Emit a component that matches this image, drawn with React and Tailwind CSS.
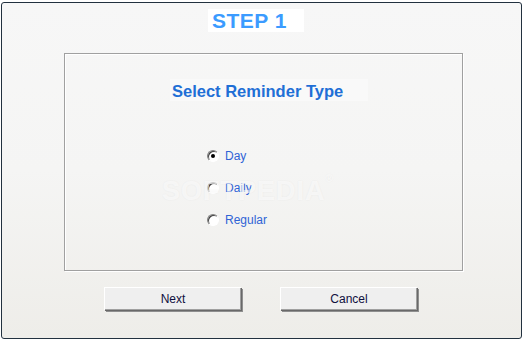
import React, { useState } from "react";

function Radio({ checked, label, onClick }) {
  return (
    <div className="flex items-center h-[14px] cursor-default" onClick={onClick}>
      <div className="w-[12px] h-[12px] rounded-full border border-t-[#808080] border-l-[#808080] border-b-[#ffffff] border-r-[#ffffff] bg-white flex items-center justify-center shadow-[inset_1px_1px_0_#404040]">
        {checked && <div className="w-[4px] h-[4px] rounded-full bg-black" />}
      </div>
      <span className="ml-[6px] text-[12px] leading-[14px] text-[#2f63d6]">{label}</span>
    </div>
  );
}

function Btn({ children }) {
  return (
    <div className="w-[137px] h-[23px] bg-[#efefef] border-t border-l border-t-white border-l-white shadow-[inset_-1px_-1px_0_#a0a0a0,1px_1px_0_#696969,2px_2px_0_#8f8f8f] flex items-center justify-center text-[12px] text-[#101040]">
      {children}
    </div>
  );
}

export default function App() {
  const [sel, setSel] = useState(0);
  return (
    <div className="w-[523px] h-[341px] bg-white pt-[2px] pl-[1px]" style={{ fontFamily: '"Liberation Sans", Arial, sans-serif' }}>
      <div className="w-[521px] h-[337px] border border-[#22313f] rounded-[3px] bg-gradient-to-b from-[#f7f7f7] via-[#f5f5f4] to-[#eeede9] relative flex flex-col">
        <div className="ml-[206px] mt-[6px] w-[96px] h-[23px] bg-white flex items-center pl-[4px]">
          <span className="text-[21px] font-bold text-[#3b9bff] leading-none tracking-[0.5px]">STEP 1</span>
        </div>
        <div className="ml-[62px] mt-[21px] w-[399px] h-[218px] border border-[#a0a0a0] shadow-[inset_1px_1px_0_#ffffff,1px_1px_0_#ffffff] flex flex-col">
          <div className="ml-[105px] mt-[25px] w-[198px] h-[22px] bg-[#f9f9f9] flex items-center pl-[2px] pt-[2px]">
            <span className="text-[16.5px] font-bold text-[#1f6fd6] leading-none">Select Reminder Type</span>
          </div>
          <div className="ml-[142px] mt-[48px] flex flex-col gap-[18px]">
            <Radio checked={sel === 0} label="Day" onClick={() => setSel(0)} />
            <Radio checked={sel === 1} label="Daily" onClick={() => setSel(1)} />
            <Radio checked={sel === 2} label="Regular" onClick={() => setSel(2)} />
          </div>
        </div>
        <div className="ml-[102px] mt-[16px] flex gap-[39px]">
          <Btn>Next</Btn>
          <Btn>Cancel</Btn>
        </div>
        <div className="absolute left-[160px] top-[168px] text-[27px] font-bold text-white/60 tracking-[1px] pointer-events-none select-none [text-shadow:0_0_2px_rgba(0,0,0,0.05)]" aria-hidden="true">
          SOFTPEDIA<span className="text-[10px] align-top">®</span>
        </div>
      </div>
    </div>
  );
}
